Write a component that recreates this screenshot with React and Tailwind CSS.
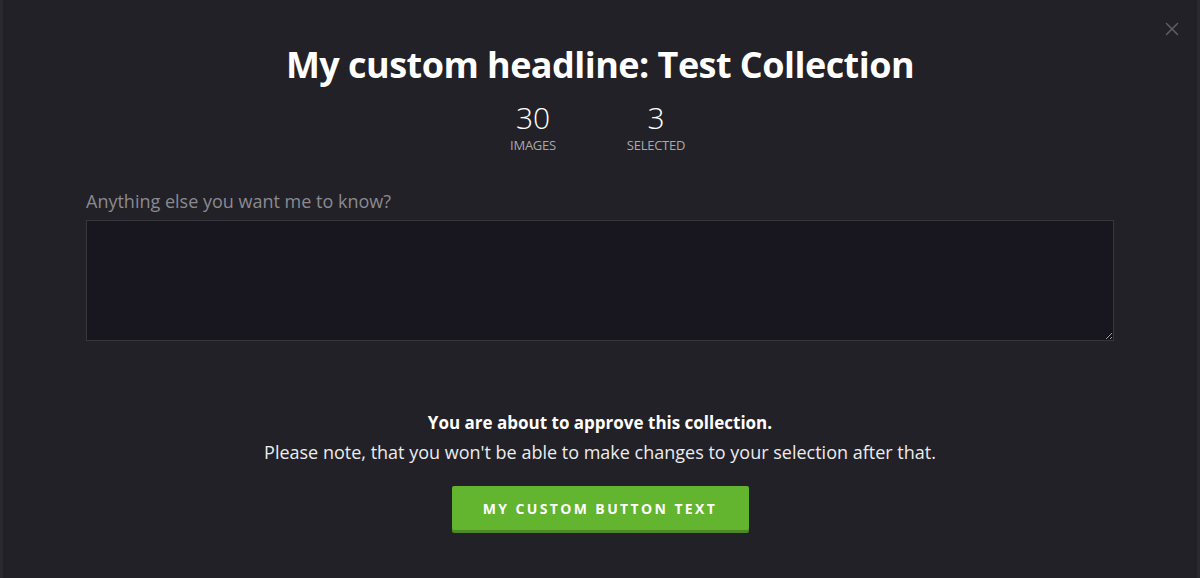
import { X } from 'lucide-react'

const font = { fontFamily: '"Open Sans", Lato, sans-serif' }

function Stat({ value, label }) {
  return (
    <div className="flex w-[100px] flex-col items-center">
      <span className="text-[30px] font-light leading-[30px] text-white">{value}</span>
      <span className="mt-[5px] text-[13px] leading-[14px] tracking-[-0.02em] text-[#a9a9ad]">{label}</span>
    </div>
  )
}

export default function App() {
  return (
    <div
      className="relative h-[578px] w-[1200px] overflow-hidden border-x-[3px] border-[#2a292f] bg-[#222127]"
      style={font}
    >
      <button className="absolute right-[14px] top-[18px] text-[#5f5e64]">
        <X size={22} strokeWidth={1.6} />
      </button>

      <div className="flex flex-col items-center pt-[42px]">
        <h1 className="text-[36px] font-bold leading-[46px] tracking-[-0.015em] text-white">
          My custom headline: Test Collection
        </h1>
        <div className="mt-[15px] flex gap-[23px] pr-[11px]">
          <Stat value="30" label="IMAGES" />
          <Stat value="3" label="SELECTED" />
        </div>
      </div>

      <div className="px-[83px] pt-[38px]">
        <label className="block text-[18px] leading-[22px] text-[#8b8a90]">
          Anything else you want me to know?
        </label>
        <textarea className="mt-[8px] block h-[121px] w-full resize-y border border-[#37363c] bg-[#18171f] p-3 text-white outline-none" />
      </div>

      <div className="flex flex-col items-center pt-[71px]">
        <p className="text-[17px] font-bold leading-[22px] text-white">
          You are about to approve this collection.
        </p>
        <p className="mt-[7px] text-[18px] leading-[22px] text-[#ececee]">
          Please note, that you won't be able to make changes to your selection after that.
        </p>
        <button className="mt-[23px] h-[44px] w-[297px] rounded-[2px] bg-[#63b42e] text-[14px] font-bold tracking-[0.17em] text-white shadow-[0_3px_0_#4c8a24]">
          MY CUSTOM BUTTON TEXT
        </button>
      </div>
    </div>
  )
}
